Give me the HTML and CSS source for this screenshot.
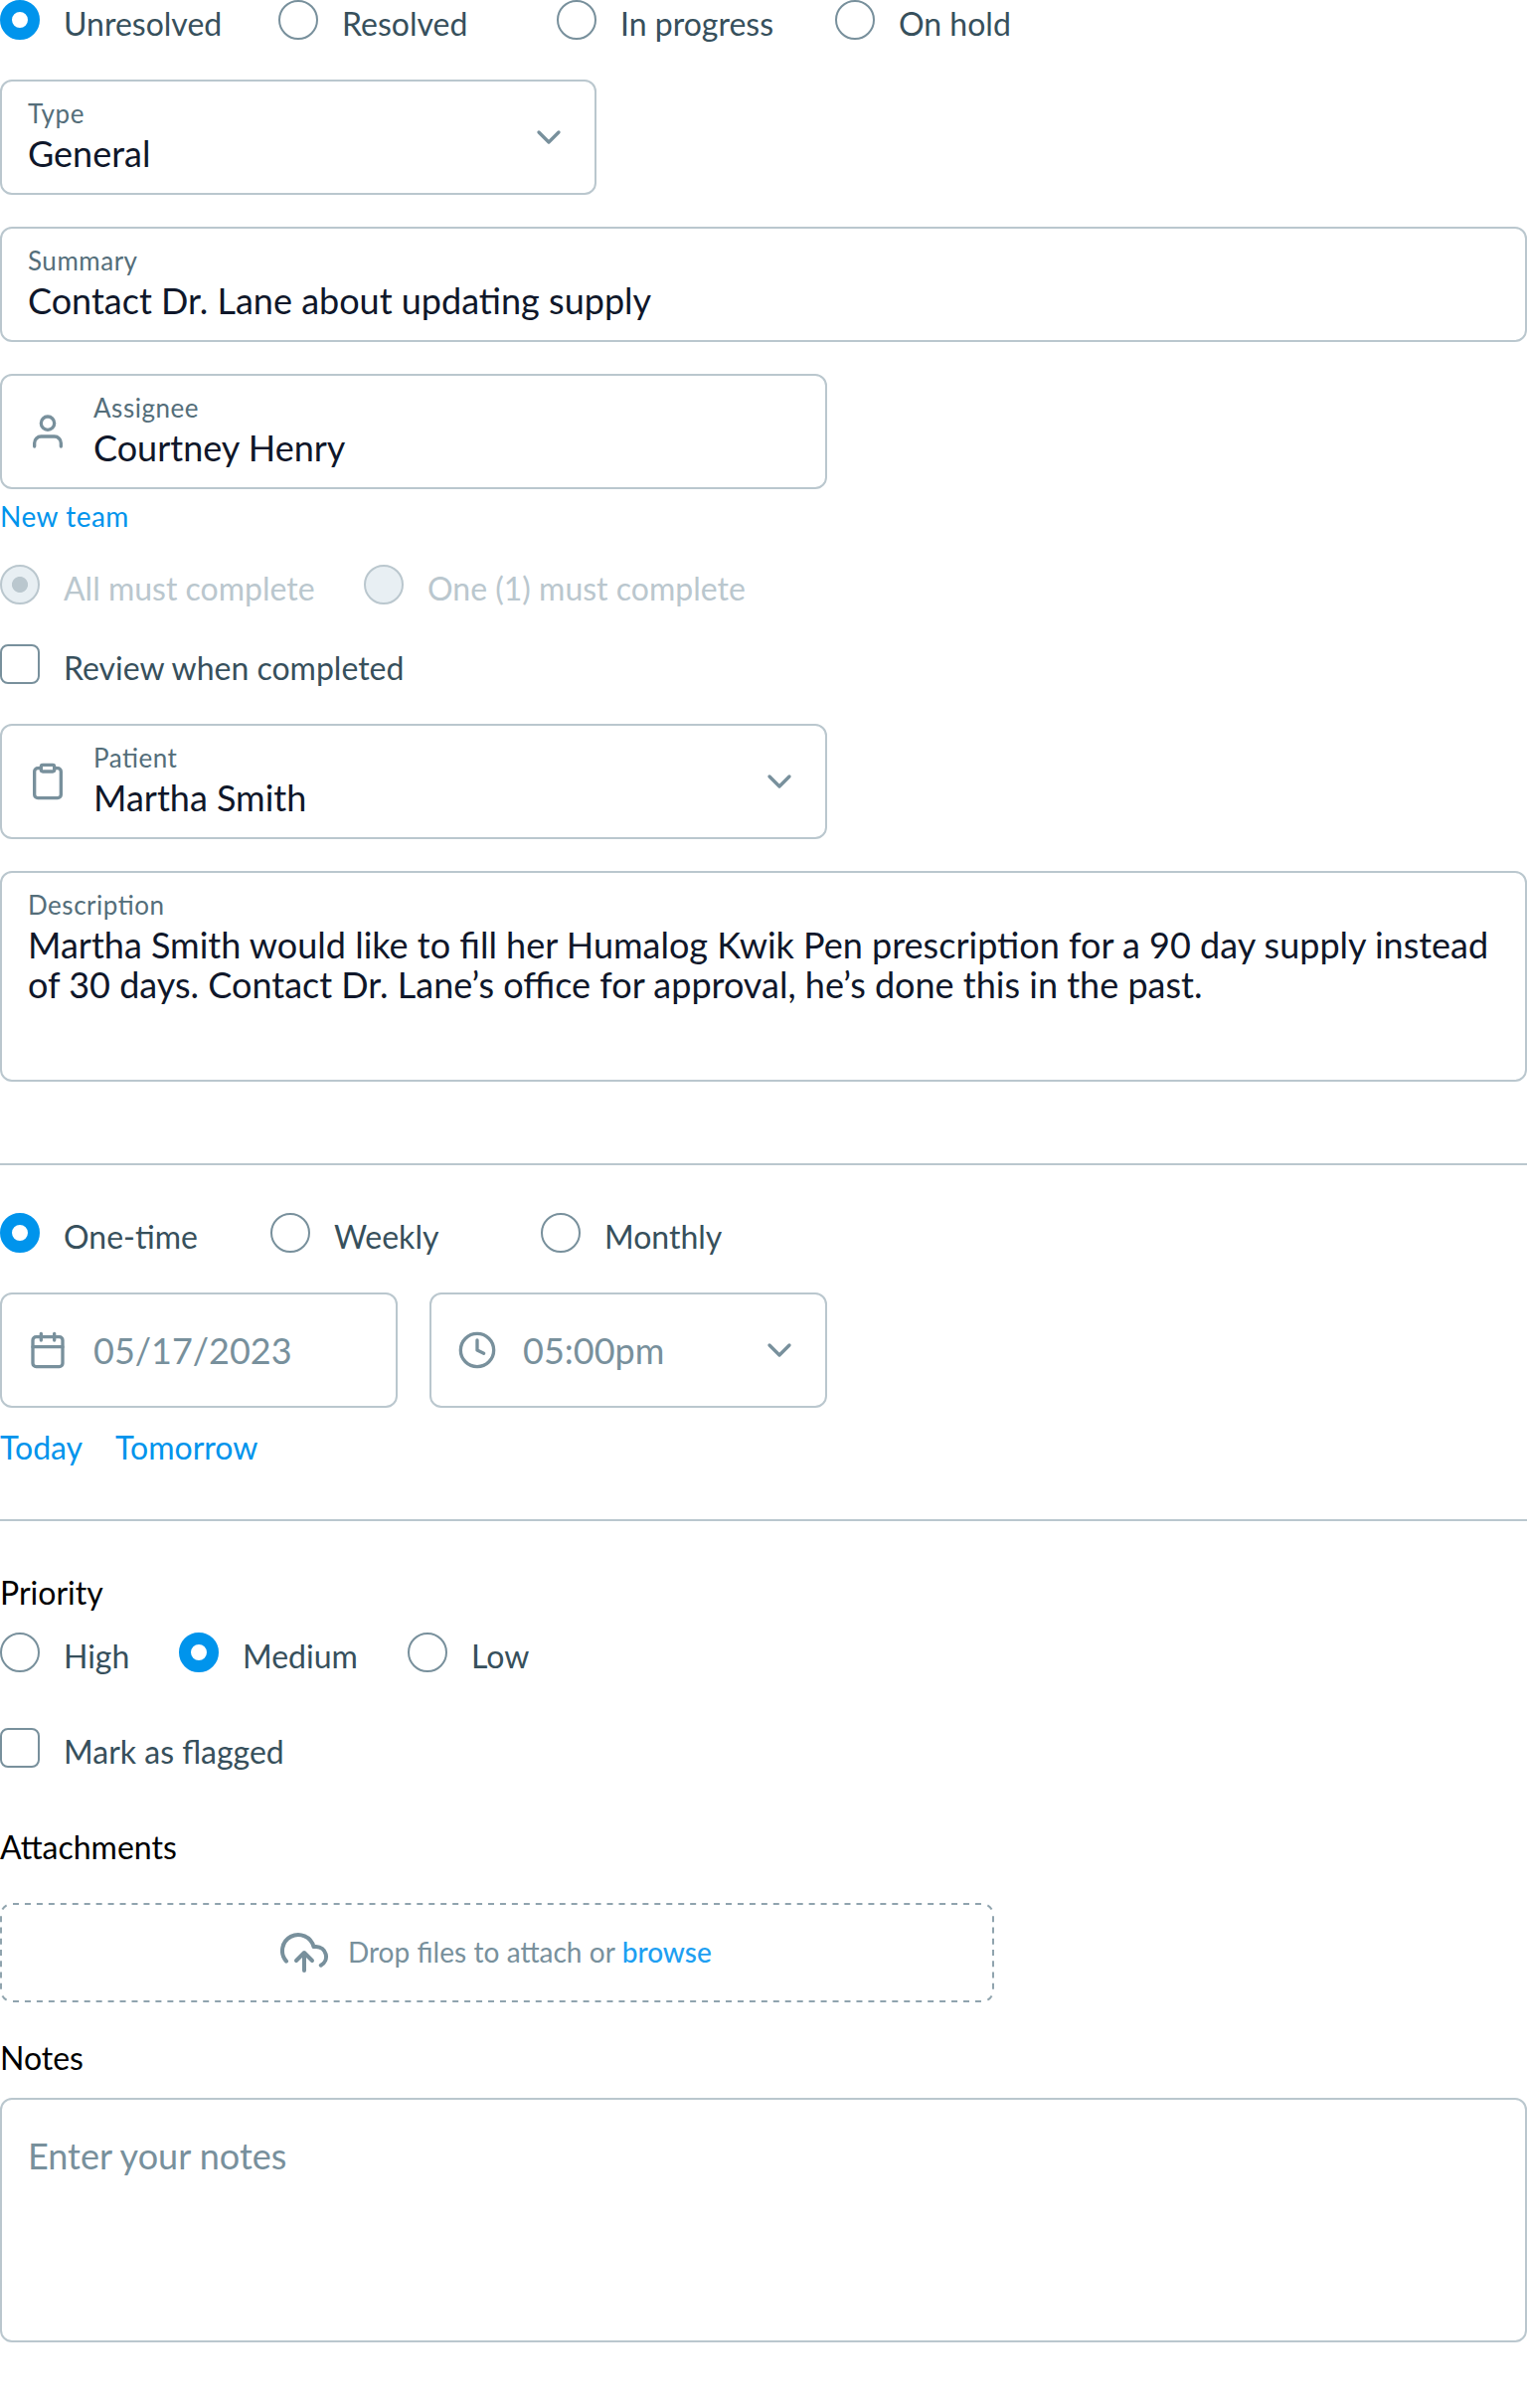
FILE: index.html
```html
<!DOCTYPE html>
<html lang="en">
<head>
<meta charset="utf-8">
<title>Task</title>
<link rel="stylesheet" href="styles.css">
</head>
<body>
<form class="task">
  <div class="options options--status">
    <label class="option"><span class="radio radio--on"></span><span class="option-text">Unresolved</span></label>
    <label class="option"><span class="radio"></span><span class="option-text">Resolved</span></label>
    <label class="option"><span class="radio"></span><span class="option-text">In progress</span></label>
    <label class="option"><span class="radio"></span><span class="option-text">On hold</span></label>
  </div>

  <div class="field field--type">
    <div class="field-body"><span class="field-label">Type</span><span class="field-value">General</span></div>
    <svg class="icon chevron" viewBox="0 0 24 24"><path d="M6 9l6 6 6-6"/></svg>
  </div>

  <div class="field">
    <div class="field-body"><span class="field-label">Summary</span><span class="field-value">Contact Dr. Lane about updating supply</span></div>
  </div>

  <div class="field field--medium">
    <svg class="icon lead" viewBox="0 0 24 24"><path d="M20 21v-2a4 4 0 0 0-4-4H8a4 4 0 0 0-4 4v2"/><circle cx="12" cy="7" r="4"/></svg>
    <div class="field-body"><span class="field-label">Assignee</span><span class="field-value">Courtney Henry</span></div>
  </div>
  <a class="link link--team">New team</a>

  <div class="options options--complete">
    <label class="option option--disabled"><span class="radio radio--on"></span><span class="option-text">All must complete</span></label>
    <label class="option option--disabled"><span class="radio"></span><span class="option-text">One (1) must complete</span></label>
  </div>
  <label class="option option--review"><span class="checkbox"></span><span class="option-text">Review when completed</span></label>

  <div class="field field--medium">
    <svg class="icon lead" viewBox="0 0 24 24"><path d="M16 4h2a2 2 0 0 1 2 2v14a2 2 0 0 1-2 2H6a2 2 0 0 1-2-2V6a2 2 0 0 1 2-2h2"/><rect x="8" y="2" width="8" height="4" rx="1"/></svg>
    <div class="field-body"><span class="field-label">Patient</span><span class="field-value">Martha Smith</span></div>
    <svg class="icon chevron" viewBox="0 0 24 24"><path d="M6 9l6 6 6-6"/></svg>
  </div>

  <div class="field field--description">
    <div class="field-body"><span class="field-label">Description</span><span class="field-value">Martha Smith would like to fill her Humalog Kwik Pen prescription for a 90 day supply instead of 30 days. Contact Dr. Lane’s office for approval, he’s done this in the past.</span></div>
  </div>

  <hr class="divider divider--first">

  <div class="options options--repeat">
    <label class="option"><span class="radio radio--on"></span><span class="option-text">One-time</span></label>
    <label class="option"><span class="radio"></span><span class="option-text">Weekly</span></label>
    <label class="option"><span class="radio"></span><span class="option-text">Monthly</span></label>
  </div>
  <div class="when">
    <div class="field field--when">
      <svg class="icon lead" viewBox="0 0 24 24"><rect x="3" y="4" width="18" height="18" rx="2"/><path d="M16 2v4M8 2v4M3 10h18"/></svg>
      <span class="placeholder">05/17/2023</span>
    </div>
    <div class="field field--when">
      <svg class="icon lead" viewBox="0 0 24 24"><circle cx="12" cy="12" r="10"/><path d="M12 6v6l4 2"/></svg>
      <span class="placeholder">05:00pm</span>
      <svg class="icon chevron" viewBox="0 0 24 24"><path d="M6 9l6 6 6-6"/></svg>
    </div>
  </div>
  <div class="shortcuts"><a class="link">Today</a><a class="link">Tomorrow</a></div>

  <hr class="divider divider--second">

  <h2 class="heading">Priority</h2>
  <div class="options options--priority">
    <label class="option"><span class="radio"></span><span class="option-text">High</span></label>
    <label class="option"><span class="radio radio--on"></span><span class="option-text">Medium</span></label>
    <label class="option"><span class="radio"></span><span class="option-text">Low</span></label>
  </div>
  <label class="option option--flag"><span class="checkbox"></span><span class="option-text">Mark as flagged</span></label>

  <h2 class="heading heading--attachments">Attachments</h2>
  <div class="dropzone">
    <svg class="dropzone-outline" viewBox="0 0 1000 100">
      <path class="dash-long" d="M13 1H987M13 99H987"/>
      <path class="dash-short" d="M1 13.300V86.700M999 13.300V86.700"/>
      <path d="M2.400 6.600A11 11 0 0 1 6.600 2.400M993.400 2.400A11 11 0 0 1 997.600 6.600M997.600 93.400A11 11 0 0 1 993.400 97.600M6.600 97.600A11 11 0 0 1 2.400 93.400"/>
    </svg>
    <svg class="icon cloud" viewBox="0 0 24 24"><path d="M16 16l-4-4-4 4M12 12v9"/><path d="M20.390 18.390A5 5 0 0 0 18 9h-1.260A8 8 0 1 0 3 16.300"/></svg>
    <span class="dropzone-text">Drop files to attach or <a class="browse">browse</a></span>
  </div>

  <h2 class="heading heading--notes">Notes</h2>
  <div class="field field--notes"><span class="placeholder">Enter your notes</span></div>
</form>
</body>
</html>
```
FILE: styles.css
```css
* { box-sizing: border-box; }
body { margin: 0; background: #fff; font-family: Lato, sans-serif; }
.task { display: flex; flex-direction: column; width: 1536px; height: 2422px; }
.task > * { flex-shrink: 0; }

.options { display: grid; height: 40px; }
.options--status { grid-template-columns: repeat(4, 280px); margin-bottom: 40px; }
.options--repeat { grid-template-columns: repeat(3, 272px); margin-bottom: 40px; }
.options--complete { grid-template-columns: 366px auto; justify-content: start; margin-bottom: 40px; }
.options--priority { grid-template-columns: 180px 230px auto; justify-content: start; margin-bottom: 56px; }
.option { display: flex; gap: 24px; height: 40px; color: #37505c; white-space: nowrap; }
.option-text { padding-top: 4px; font-size: 32px; line-height: 40px; }
.option--review { margin-bottom: 40px; }
.option--flag { margin-bottom: 60px; }
.option--disabled { color: #bac7ce; }

.radio { flex: none; width: 40px; height: 40px; border: 2px solid #78909c; border-radius: 50%; }
.radio--on { border: 12px solid #0094ec; }
.option--disabled .radio { border: 2px solid #bac7ce; background: #e8eff3; }
.option--disabled .radio--on { background: radial-gradient(circle, #bac7ce 7.600px, #e8eff3 8.400px); }
.checkbox { flex: none; width: 40px; height: 40px; border: 2px solid #78909c; border-radius: 8px; }

.field { display: flex; align-items: center; width: 100%; height: 116px; margin-bottom: 32px; padding: 0 26px; border: 2px solid #bac7ce; border-radius: 12px; }
.field--type { width: 600px; }
.field--medium { width: 832px; }
.field--when { width: 400px; margin: 0; }
.field--description { height: 212px; align-items: flex-start; margin-bottom: 82px; }
.field--notes { height: 246px; align-items: flex-start; margin: 0; padding-top: 36px; }
.field-body { display: flex; flex: 1; flex-direction: column; height: 112px; padding-top: 16px; }
.field-label { font-size: 26px; line-height: 32px; letter-spacing: 0.520px; font-feature-settings: "liga" 1; color: #546e7a; }
.field-value { padding-top: 4px; font-size: 36px; line-height: 40px; color: #0f172a; }
.placeholder { flex: 1; font-size: 36px; line-height: 40px; color: #78909c; }

.icon { flex: none; fill: none; stroke: #78909c; stroke-width: 2; stroke-linecap: round; stroke-linejoin: round; }
.lead { width: 40px; height: 40px; margin-right: 26px; }
.chevron { width: 40px; height: 40px; }

.link { color: #0094ec; font-size: 32px; line-height: 40px; }
.link--team { margin: -22px 0 32px; font-size: 28px; line-height: 34px; letter-spacing: 0.500px; }
.when { display: flex; gap: 32px; }
.shortcuts { display: flex; gap: 33px; height: 40px; margin: 20px 0 52px; }

.divider { width: 100%; height: 2px; margin: 0; border: 0; background: #bac7ce; }
.divider--first { margin-bottom: 48px; }
.divider--second { margin-bottom: 52px; }
.heading { margin: 0 0 20px; font-size: 32px; line-height: 40px; font-weight: 400; color: #000; }
.heading--attachments { margin-bottom: 36px; }

.dropzone { position: relative; display: flex; align-items: center; justify-content: flex-start; width: 1000px; height: 100px; margin-bottom: 36px; padding-left: 282px; }
.dropzone-outline { position: absolute; inset: 0; width: 1000px; height: 100px; fill: none; stroke: #90a4ae; stroke-width: 2; }
.dash-long { stroke-dasharray: 6 5.950; }
.dash-short { stroke-dasharray: 6 5.230; }
.cloud { width: 48px; height: 48px; margin-right: 20px; }
.dropzone-text { padding-bottom: 2px; font-size: 28px; line-height: 36px; word-spacing: 0.200px; color: #78909c; }
.browse { color: #1e9ff2; font-weight: 500; }
```
